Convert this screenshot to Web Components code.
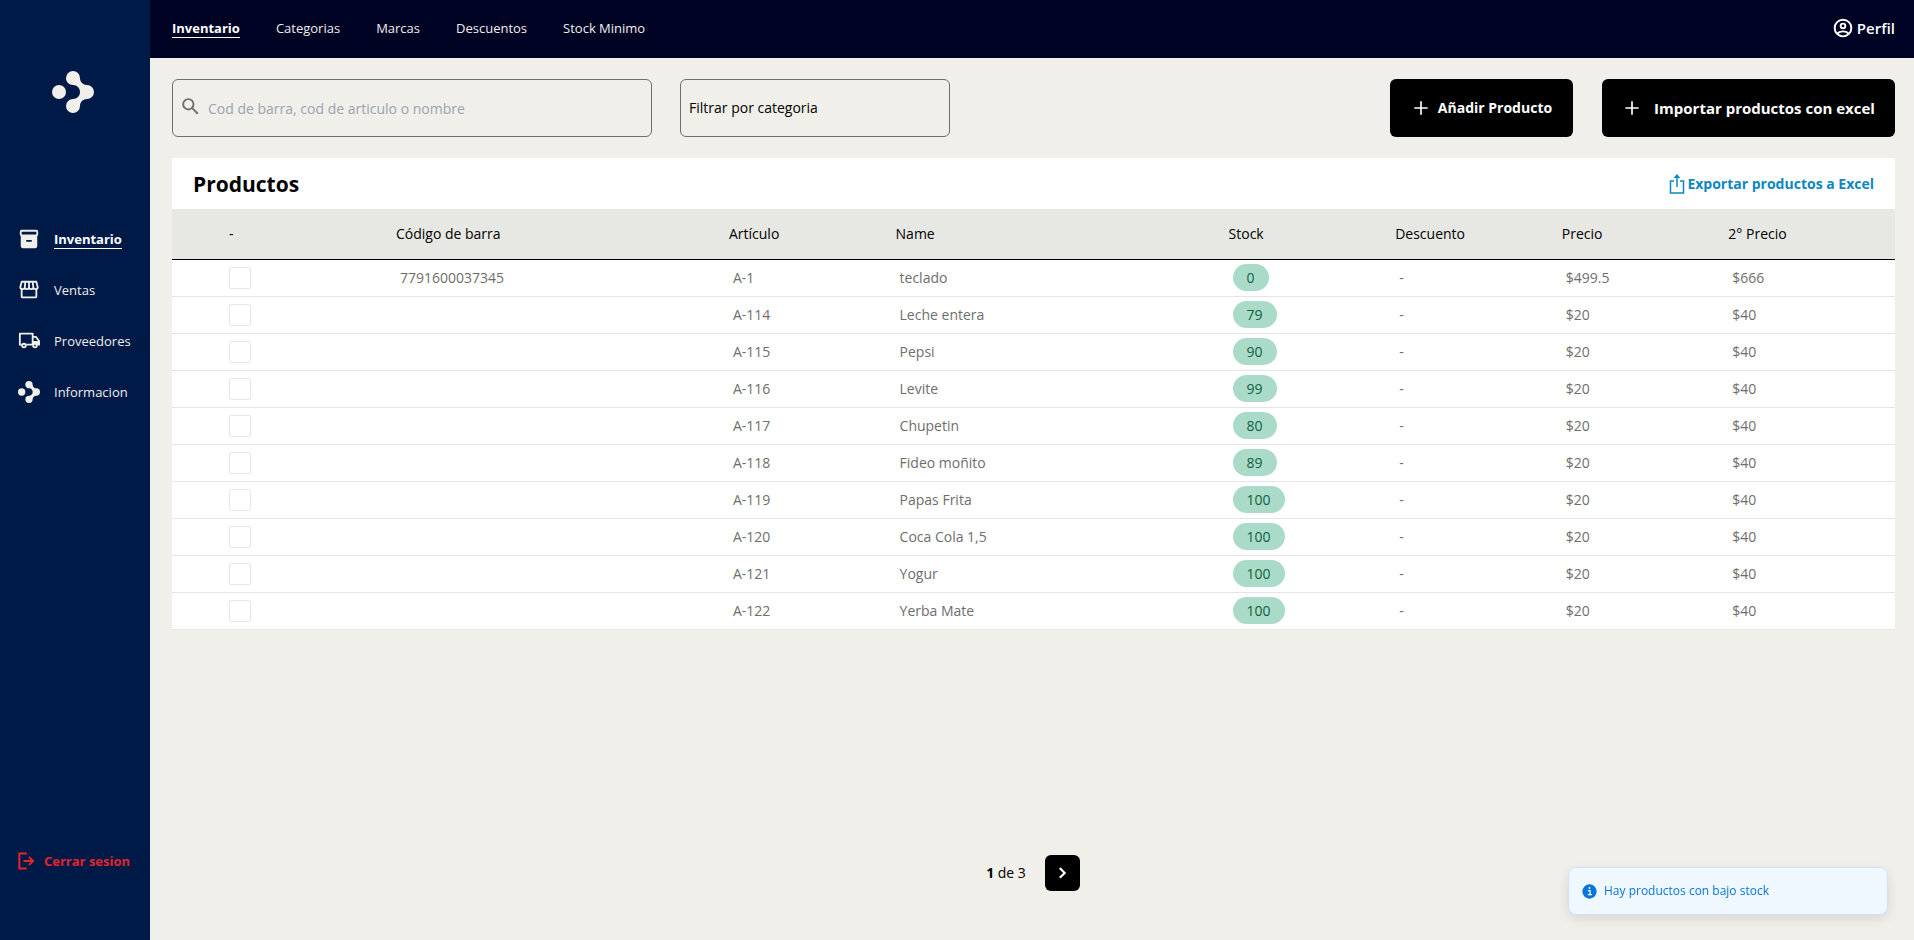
<!DOCTYPE html>
<html lang="es">
<head>
<meta charset="utf-8">
<title>Inventario</title>
<style>
  html, body { margin: 0; }
  body {
    background: #f0efea;
    color: #000;
    font: 14px/20px "Open Sans", "Noto Sans", sans-serif;
    --cream: #f0efea;
    --navy: #001a48;
    --night: #000224;
  }
</style>
</head>
<body>
<app-shell>
  <side-bar slot="side"></side-bar>
  <top-bar slot="top"></top-bar>
  <tool-bar></tool-bar>
  <product-panel></product-panel>
  <page-picker slot="foot"></page-picker>
  <toast-note slot="toast">Hay productos con bajo stock</toast-note>
</app-shell>

<script>
const icons = {
  brand: '<svg viewBox="0 0 42 42" fill="currentColor"><circle cx="7" cy="21" r="7"/><path d="M21 0a7 7 0 0 0-7 7c0 4 3 7 7 7 4 0 7 3 7 7s-3 7-7 7a7 7 0 1 0 7 7c0-4 3-7 7-7a7 7 0 0 0 0-14c-4 0-7-3-7-7a7 7 0 0 0-7-7z"/></svg>',
  box: '<svg viewBox="0 0 24 24" fill="currentColor"><path fill-rule="evenodd" d="M20 2H4a2 2 0 0 0-2 2v3c0 .8.4 1.400 1 1.700V20a2 2 0 0 0 2 2h14a2 2 0 0 0 2-2V8.700c.6-.3 1-.9 1-1.700V4a2 2 0 0 0-2-2zM4 4h16v3H4zM9 13h6v2H9z"/></svg>',
  shop: '<svg viewBox="0 0 24 24" fill="none" stroke="currentColor" stroke-width="2" stroke-linejoin="round"><path d="M4 11v8a1 1 0 0 0 1 1h14a1 1 0 0 0 1-1v-8"/><path d="M4 3h16l1.500 6c0 1.300-1.200 2-2.500 2s-2.300-.7-2.300-2c0 1.300-1 2-2.300 2S12 10.300 12 9c0 1.300-1 2-2.300 2s-2.300-.7-2.300-2c0 1.300-1 2-2.300 2S2.500 10.300 2.500 9zM12 3v6M8 3l-.6 6M16 3l.7 6"/></svg>',
  truck: '<svg viewBox="0 0 24 24" fill="none" stroke="currentColor" stroke-width="2" stroke-linejoin="round"><path d="M4 16H2V4h14v12H9M16 7.500h3.500l3.500 4.500v4h-2"/><path d="M16 12h7v4h-7z" fill="currentColor" stroke="none"/><circle cx="6.500" cy="17" r="2" fill="#001a48"/><circle cx="18.500" cy="17" r="2" fill="#001a48"/></svg>',
  exit: '<svg viewBox="0 0 24 24" fill="none" stroke="currentColor" stroke-width="2.400"><path d="M13 3H4v18h9M9 12h12M15.500 7l5 5-5 5"/></svg>',
  user: '<svg viewBox="0 0 24 24" fill="none" stroke="currentColor" stroke-width="2.300"><circle cx="12" cy="12" r="10"/><circle cx="12" cy="9.500" r="2.800"/><path d="M5 19c1.800-2.200 4.300-3 7-3s5.200.8 7 3"/></svg>',
  search: '<svg viewBox="0 0 24 24" fill="none" stroke="currentColor" stroke-width="2.300"><circle cx="8.800" cy="7.500" r="6.200"/><path d="M13.200 11.900l7 7"/></svg>',
  plus: '<svg viewBox="0 0 24 24" fill="none" stroke="currentColor" stroke-width="2"><path d="M12 4v16M4 12h16"/></svg>',
  share: '<svg viewBox="0 0 16 20" fill="none" stroke="currentColor"><path stroke-width="1.500" d="M5 7H1.500v12h13V7H11M8 13V1.500"/><path d="M8 0l3.500 4h-7z" fill="currentColor" stroke="none"/></svg>',
  next: '<svg viewBox="0 0 24 24" fill="none" stroke="currentColor" stroke-width="4"><path d="M7 2l9 9-9 9"/></svg>',
  info: '<svg viewBox="0 0 20 20"><circle cx="10" cy="10" r="8.400" fill="currentColor"/><path d="M8 9h2.700v4.500M8 13.800h5" stroke="#eff8ff" stroke-width="1.500" fill="none"/><circle cx="10" cy="6" r="1.200" fill="#eff8ff"/></svg>'
};

const base = `*{box-sizing:border-box} svg{display:block;width:100%;height:100%}
  button,input,select{font:inherit;color:inherit;margin:0} a{color:inherit;text-decoration:none}`;

function define(name, css, html) {
  const template = document.createElement('template');
  template.innerHTML = `<style>${base}${css}</style>${html}`;
  customElements.define(name, class extends HTMLElement {
    constructor() {
      super();
      this.attachShadow({ mode: 'open' }).append(template.content.cloneNode(true));
    }
  });
}

customElements.define('ui-icon', class extends HTMLElement {
  constructor() { super(); this.attachShadow({ mode: 'open' }); }
  connectedCallback() {
    this.shadowRoot.innerHTML =
      `<style>:host{display:block;flex:none;width:22px;height:22px}svg{display:block;width:100%;height:100%}</style>` +
      icons[this.getAttribute('name')];
  }
});

define('app-shell', `
  :host{display:grid;grid-template-columns:150px minmax(0,1fr);min-height:100vh}
  .main{display:flex;flex-direction:column}
  main{display:flex;flex-direction:column;gap:21px;padding:21px 19px 21px 22px;flex:1}
  .foot{padding-bottom:49px}`,
  `<slot name="side"></slot>
   <div class="main"><slot name="top"></slot><main><slot></slot></main>
   <div class="foot"><slot name="foot"></slot></div></div><slot name="toast"></slot>`);

define('side-bar', `
  :host{display:flex;flex-direction:column;background:var(--navy);color:var(--cream);padding:71px 0 67px}
  .logo{width:42px;height:42px;margin:0 auto 114px 52px}
  nav{display:flex;flex-direction:column;gap:27px;padding-left:18px}
  nav a{display:flex;align-items:center;gap:14px;height:24px;font-size:13px}
  .on span{font-weight:700;border-bottom:1px solid #fff;color:#fff;line-height:18px}
  button{display:flex;align-items:center;gap:8px;margin:auto 0 0 16px;padding:0;border:0;background:none;color:#e3242b;font-size:13px;font-weight:700;line-height:24px}
  button ui-icon{width:20px;height:20px}`,
  `<ui-icon class="logo" name="brand"></ui-icon>
   <nav>
    <a href="#" class="on"><ui-icon name="box"></ui-icon><span>Inventario</span></a>
    <a href="#"><ui-icon name="shop"></ui-icon><span>Ventas</span></a>
    <a href="#"><ui-icon name="truck"></ui-icon><span>Proveedores</span></a>
    <a href="#"><ui-icon name="brand"></ui-icon><span>Informacion</span></a>
   </nav>
   <button type="button"><ui-icon name="exit"></ui-icon>Cerrar sesion</button>`);

define('top-bar', `
  :host{display:flex;align-items:center;justify-content:space-between;box-sizing:border-box;height:58px;padding:0 19px 2px 22px;background:var(--night);color:#fff}
  nav{display:flex;gap:36px;font-size:13px;line-height:18px}
  nav a{border-bottom:1px solid transparent;color:var(--cream)}
  nav .on{font-weight:700;border-color:#fff;color:#fff}
  .me{display:flex;align-items:center;gap:4px;font-size:15px;font-weight:600}
  .me ui-icon{width:20px;height:20px}`,
  `<nav><a href="#" class="on">Inventario</a><a href="#">Categorias</a><a href="#">Marcas</a><a href="#">Descuentos</a><a href="#">Stock Minimo</a></nav>
   <a href="#" class="me"><ui-icon name="user"></ui-icon>Perfil</a>`);

define('tool-bar', `
  :host{display:flex;gap:28px;height:58px}
  .search{display:flex;align-items:center;gap:7px;flex:0 1 480px;padding:0 8px;border:1px solid #6f6f6f;border-radius:6px;color:#6f6f6f}
  .search ui-icon{width:20px;height:20px}
  input{flex:1;min-width:0;height:100%;border:0;padding:0;background:none;outline:0}
  input::placeholder{color:#9ca3af;opacity:1}
  select{flex:0 1 270px;appearance:none;padding:0 8px;border:1px solid #6f6f6f;border-radius:6px;background:none}
  .actions{display:flex;gap:29px;margin-left:auto}
  button{display:flex;align-items:center;justify-content:center;flex:0 0 183px;gap:7px;border:0;border-radius:6px;padding:0;background:#000;color:#fff;font-weight:700;white-space:nowrap}
  .wide{flex-basis:293px;gap:12px;font-size:15px}
  button ui-icon{width:20px;height:20px}`,
  `<label class="search"><ui-icon name="search"></ui-icon><input type="text" placeholder="Cod de barra, cod de articulo o nombre" aria-label="Buscar"></label>
   <select aria-label="Categoria"><option>Filtrar por categoria</option></select>
   <div class="actions"><button type="button"><ui-icon name="plus"></ui-icon>Añadir Producto</button>
   <button type="button" class="wide"><ui-icon name="plus"></ui-icon>Importar productos con excel</button></div>`);

define('stock-badge', `
  :host{display:block;width:fit-content;box-sizing:border-box;height:27px;margin-bottom:1px;padding:1px 14px 0;border-radius:14px;background:#a9dbc8;color:#11603f;line-height:26px}`,
  `<slot></slot>`);

const products = [
  ['7791600037345', 'A-1', 'teclado', 0, '$499.5', '$666'],
  ['', 'A-114', 'Leche entera', 79, '$20', '$40'],
  ['', 'A-115', 'Pepsi', 90, '$20', '$40'],
  ['', 'A-116', 'Levite', 99, '$20', '$40'],
  ['', 'A-117', 'Chupetin', 80, '$20', '$40'],
  ['', 'A-118', 'Fideo moñito', 89, '$20', '$40'],
  ['', 'A-119', 'Papas Frita', 100, '$20', '$40'],
  ['', 'A-120', 'Coca Cola 1,5', 100, '$20', '$40'],
  ['', 'A-121', 'Yogur', 100, '$20', '$40'],
  ['', 'A-122', 'Yerba Mate', 100, '$20', '$40']
];
const rows = products.map(([code, item, name, stock, price, second]) =>
  `<tr><td><input type="checkbox" aria-label="${name}"></td><td>${code}</td><td>${item}</td><td>${name}</td>
   <td><stock-badge>${stock}</stock-badge></td><td>-</td><td>${price}</td><td>${second}</td></tr>`).join('');

define('product-panel', `
  :host{display:block}
  header{display:flex;align-items:center;justify-content:space-between;height:51px;padding:0 21px;background:#fff}
  h1{margin:0;font-size:21px;line-height:28px;font-weight:700}
  header a{display:flex;align-items:center;gap:2px;color:#0a88c2;font-weight:700}
  header ui-icon{width:16px;height:20px}
  table{width:100%;table-layout:fixed;border-collapse:separate;border-spacing:0;background:#fff}
  th,td{padding:0;text-align:left;font-weight:400;white-space:nowrap}
  th{height:51px;background:#e7e8e3;border-bottom:1px solid #000}
  td{height:37px;padding-left:4px;border-bottom:1px solid #e5e5e5;color:#6e6e6e}
  th:first-child{padding-left:57px}
  td:first-child{padding-left:57px}
  .one{width:9.67%} .two{width:19.33%} .first{width:13%}
  input{display:block;appearance:none;width:22px;height:22px;border:1px solid #e5e7eb;border-radius:2px;background:#fff}`,
  `<header><h1>Productos</h1><a href="#"><ui-icon name="share"></ui-icon>Exportar productos a Excel</a></header>
   <table><colgroup><col class="first"><col class="two"><col class="one"><col class="two"><col class="one"><col class="one"><col class="one"><col class="one"></colgroup>
   <thead><tr><th>-</th><th>Código de barra</th><th>Artículo</th><th>Name</th><th>Stock</th><th>Descuento</th><th>Precio</th><th>2° Precio</th></tr></thead>
   <tbody>${rows}</tbody></table>`);

define('page-picker', `
  :host{display:flex;align-items:center;justify-content:center;gap:19px;padding-left:2px}
  button{display:grid;place-items:center;width:35px;height:36px;padding:0;border:0;border-radius:6px;background:#000;color:#fff}
  ui-icon{width:13px;height:13px}`,
  `<span><b>1</b> de 3</span><button type="button" aria-label="Siguiente"><ui-icon name="next"></ui-icon></button>`);

define('toast-note', `
  :host{position:fixed;right:26px;bottom:25px;display:flex;align-items:center;gap:6px;box-sizing:border-box;width:320px;height:48px;padding:0 12px;
    border:1px solid #d3e0fd;border-radius:8px;background:#eff8ff;color:#0973dc;font-size:12px;font-weight:500;box-shadow:0 4px 12px rgba(0,0,0,.1)}
  ui-icon{width:17px;height:17px}`,
  `<ui-icon name="info"></ui-icon><span role="status"><slot></slot></span>`);
</script>
</body>
</html>
